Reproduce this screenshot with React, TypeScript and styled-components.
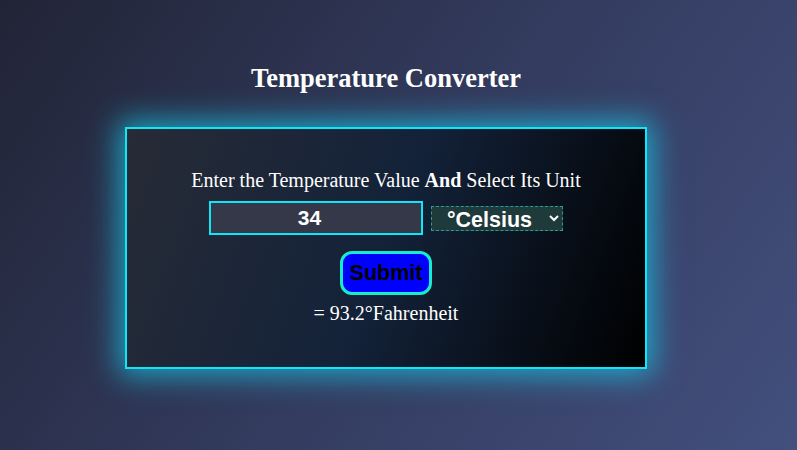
import React, { useState } from "react";
import styled, { createGlobalStyle } from "styled-components";

const Global = createGlobalStyle`
  html, body { margin: 0; padding: 0; }
  body {
    width: 797px;
    height: 450px;
    overflow: hidden;
    background: linear-gradient(125deg, #212436 0%, #333b5e 50%, #434f7d 100%);
    font-family: "Liberation Serif", "Times New Roman", serif;
    color: #fff;
  }
`;

const Page = styled.main`
  width: 772px;
  height: 450px;
  display: flex;
  flex-direction: column;
  align-items: center;
  padding-top: 63px;
  box-sizing: border-box;
`;

const Title = styled.h1`
  margin: 0;
  font-size: 26.5px;
  font-weight: bold;
  line-height: 30px;
  color: #fff;
`;

const Card = styled.section`
  margin-top: 34px;
  width: 518px;
  height: 236px;
  border: 2px solid #10e6f5;
  box-shadow: 0 0 28px 6px rgba(24, 200, 235, 0.75);
  background: linear-gradient(110deg, #272b36 0%, #132239 50%, #000 100%);
  display: flex;
  flex-direction: column;
  align-items: center;
  justify-content: center;
  padding-bottom: 2px;
  box-sizing: content-box;
`;

const Label = styled.p`
  margin: 0;
  font-size: 20px;
  line-height: 23px;
`;

const Row = styled.div`
  margin-top: 9px;
  display: flex;
  align-items: center;
  gap: 8px;
`;

const NumberInput = styled.input`
  width: 214px;
  height: 34px;
  box-sizing: border-box;
  border: 2px solid #10e6f5;
  background: #343849;
  color: #fff;
  font-family: "Liberation Sans", Arial, sans-serif;
  font-weight: bold;
  font-size: 21px;
  text-align: center;
  outline: none;
  padding: 0 13px 0 0;
`;

const UnitSelect = styled.select`
  width: 132px;
  height: 25px;
  box-sizing: border-box;
  border: 1px dashed #2a9d93;
  background: #1f3a3b;
  color: #fff;
  font-family: "Liberation Sans", Arial, sans-serif;
  font-weight: bold;
  font-size: 21.5px;
  padding: 0 6px 0 11px;
  outline: none;
  border-radius: 0;
`;

const SubmitButton = styled.button`
  margin-top: 16px;
  width: 92px;
  height: 44px;
  box-sizing: border-box;
  border: 3px solid #19ebcd;
  border-radius: 12px;
  background: #0000ff;
  color: #000;
  font-family: "Liberation Sans", Arial, sans-serif;
  font-weight: bold;
  font-size: 21.5px;
  padding: 0;
  cursor: pointer;
`;

const Result = styled.p`
  margin: 7px 0 0;
  font-size: 20px;
  line-height: 23px;
`;

export default function App() {
  const [value, setValue] = useState("34");
  const [unit, setUnit] = useState("c");
  return (
    <>
      <Global />
      <Page>
        <Title>Temperature Converter</Title>
        <Card>
          <Label>
            Enter the Temperature Value <b>And</b> Select Its Unit
          </Label>
          <Row>
            <NumberInput
              type="text"
              inputMode="decimal"
              value={value}
              onChange={(e) => setValue(e.target.value)}
            />
            <UnitSelect value={unit} onChange={(e) => setUnit(e.target.value)}>
              <option value="c">°Celsius</option>
              <option value="f">°Fahrenheit</option>
            </UnitSelect>
          </Row>
          <SubmitButton type="button">Submit</SubmitButton>
          <Result>= 93.2°Fahrenheit</Result>
        </Card>
      </Page>
    </>
  );
}
